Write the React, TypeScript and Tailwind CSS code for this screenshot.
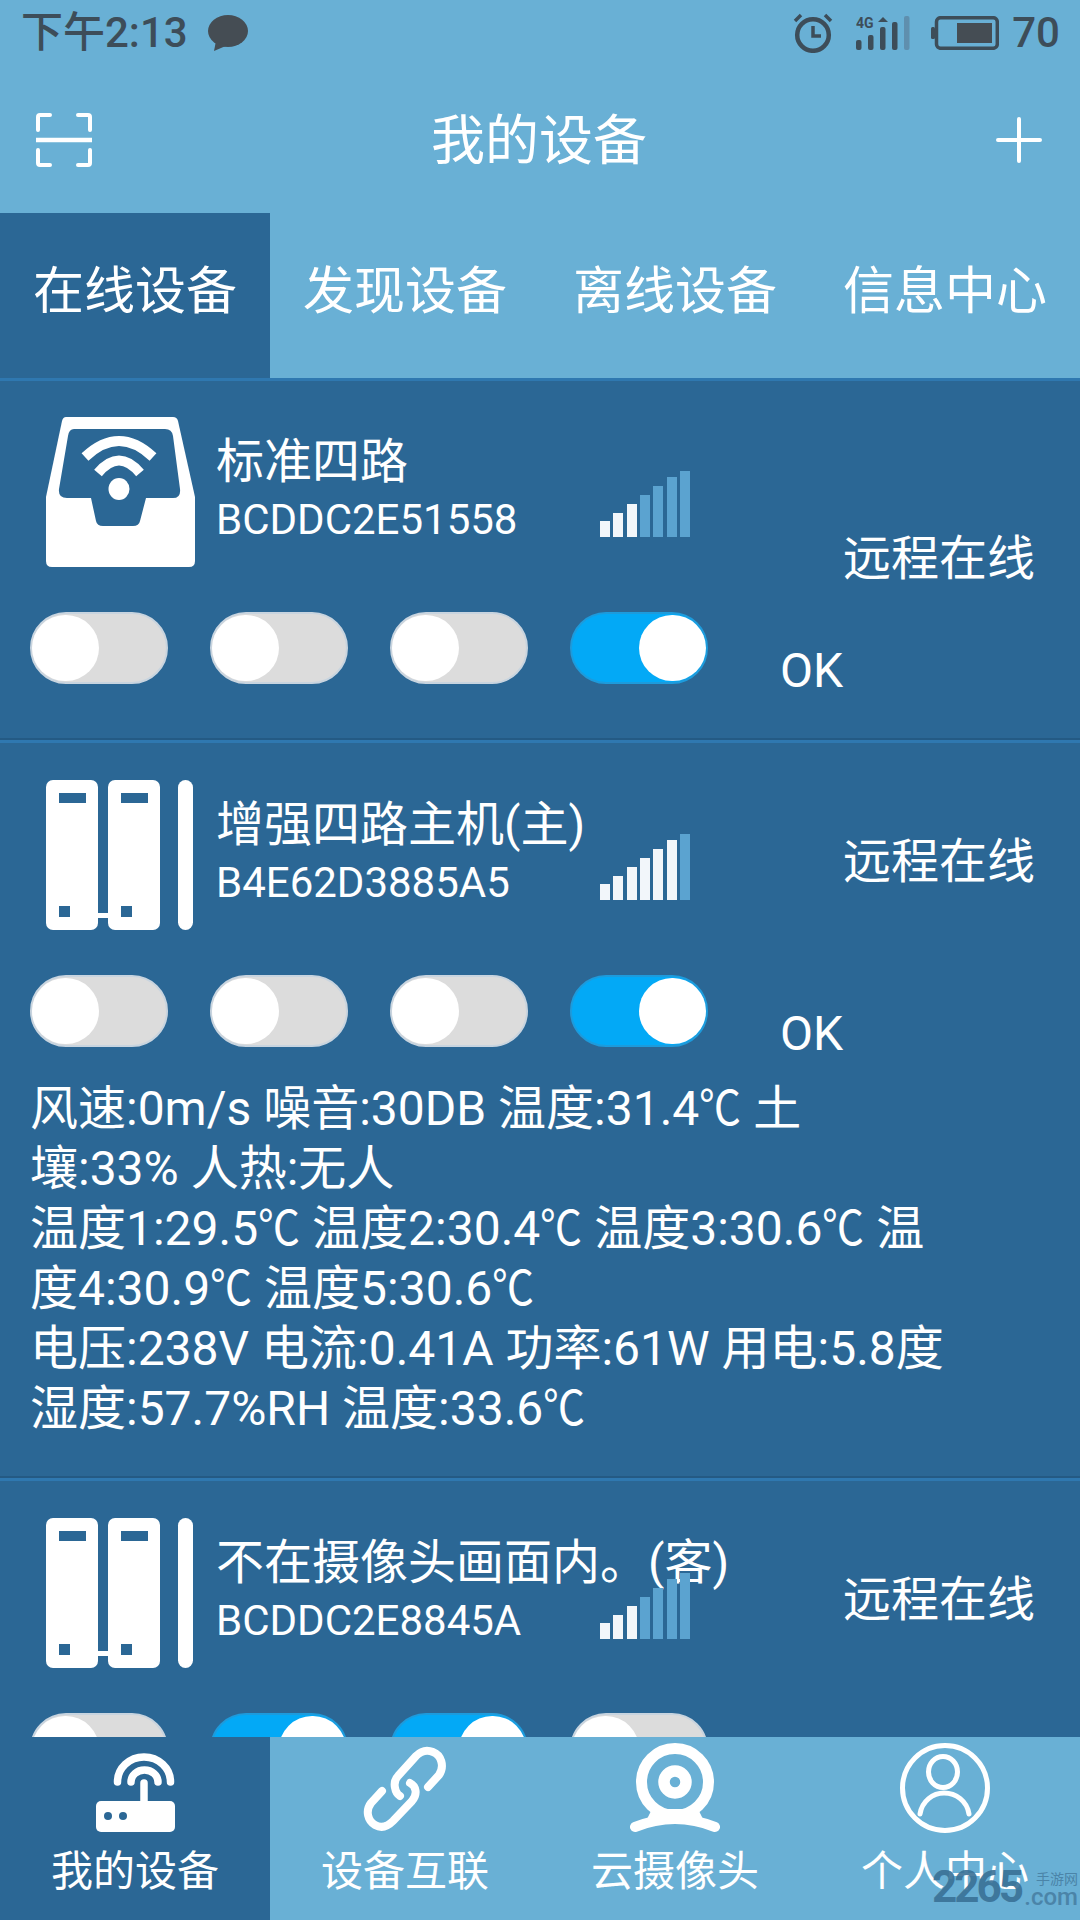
import React from "react";

const cjk = { fontFamily: 'Roboto, "Noto Sans CJK SC", sans-serif' };

function Toggle({ on = false }: { on?: boolean }) {
  return (
    <div className={`flex h-[72px] w-[138px] items-center rounded-[36px] border-2 ${on ? "justify-end border-[#1d9bdc] bg-[#03a9f6]" : "justify-start border-[#c8d4df] bg-[#dcdcdc]"}`}>
      <div className="h-[66px] w-[67px] rounded-full bg-white" />
    </div>
  );
}

function Signal({ lit }: { lit: number }) {
  const hs = [16, 24, 33, 42, 51, 60, 66];
  return (
    <div className="flex h-[66px] w-[90px] items-end justify-between">
      {hs.map((h, i) => (
        <div key={i} className={`w-[10px] ${i < lit ? "bg-[#f2f6fa]" : "bg-[#5ba3d0]"}`} style={{ height: h }} />
      ))}
    </div>
  );
}

function BoxIcon() {
  return (
    <svg width="150" height="150" viewBox="0 0 150 150" className="shrink-0">
      <path d="M20 0H127Q131 0 132 4L149 80V144Q149 150 143 150H6Q0 150 0 144V80L16 4Q17 0 20 0Z" fill="#fff" />
      <path d="M28 12H119Q126 12 127 19L134 72Q135 81 127 81H100L94 104Q93 109 87 109H57Q51 109 50 104L45 81H21Q12 81 13 72L22 19Q23 12 28 12Z" fill="#2b6795" />
      <path d="M39 40Q73 8 107 40" stroke="#fff" strokeWidth="10" fill="none" />
      <path d="M52 56Q73 31 94 56" stroke="#fff" strokeWidth="10" fill="none" />
      <ellipse cx="73" cy="72" rx="10.5" ry="11" fill="#fff" />
    </svg>
  );
}

function ServerIcon() {
  return (
    <svg width="150" height="150" viewBox="0 0 150 150" className="shrink-0">
      <rect x="0" y="0" width="52" height="150" rx="7" fill="#fff" />
      <rect x="62" y="0" width="52" height="150" rx="7" fill="#fff" />
      <rect x="132" y="0" width="15" height="150" rx="7.5" fill="#fff" />
      <rect x="50" y="133" width="14" height="5" fill="#fff" />
      <rect x="13" y="13" width="27" height="10" fill="#2b6795" />
      <rect x="75" y="13" width="27" height="10" fill="#2b6795" />
      <rect x="13" y="126" width="11" height="11" fill="#2b6795" />
      <rect x="75" y="126" width="11" height="11" fill="#2b6795" />
    </svg>
  );
}

function DeviceRow({ icon, name, mac, lit, signalTop, statusTop }: { icon: React.ReactNode; name: string; mac: string; lit: number; signalTop: string; statusTop: string }) {
  return (
    <div className="flex h-[150px] pl-[46px]">
      {icon}
      <div className="ml-[20px] mt-[16px] w-[384px] shrink-0 whitespace-nowrap text-white">
        <div className="h-[58px] text-[48px] leading-[58px]">{name}</div>
        <div className="h-[58px] text-[42px] leading-[58px]">{mac}</div>
      </div>
      <div className={signalTop}><Signal lit={lit} /></div>
      <div className={`ml-[153px] whitespace-nowrap text-[48px] leading-[60px] text-white ${statusTop}`}>远程在线</div>
    </div>
  );
}

function Toggles({ states, ok = true }: { states: boolean[]; ok?: boolean }) {
  return (
    <div className="flex pl-[30px]">
      <div className="flex gap-[42px]">
        {states.map((s, i) => <Toggle key={i} on={s} />)}
      </div>
      {ok && <div className="ml-[72px] mt-[29px] text-[48px] leading-[60px] text-white">OK</div>}
    </div>
  );
}

function Sep() {
  return <div className="h-[5px] shrink-0 border-t-2 border-[#245a84] bg-[#2f78b0]" />;
}

function NavIcon({ i }: { i: number }) {
  if (i === 0)
    return (
      <svg width="80" height="80" viewBox="0 0 80 80">
        <rect x="1" y="48" width="79" height="31" rx="5" fill="#fff" />
        <g stroke="#fff" strokeWidth="7.5" fill="none" strokeLinecap="round">
          <path d="M49 30V50" />
          <path d="M22.5 29A26.5 25 0 0 1 75.5 29" />
          <path d="M36 29A13.5 12 0 0 1 63 29" />
        </g>
        <circle cx="13" cy="63" r="4" fill="#2b6795" />
        <circle cx="28" cy="63" r="4" fill="#2b6795" />
      </svg>
    );
  if (i === 1)
    return (
      <svg width="84" height="85" viewBox="0 0 84 85" fill="none" stroke="#fff" strokeLinecap="round" strokeWidth="8">
        <path d="M65 41L76 29C82 20 78 9 70 6C63 3 57 6 53 10L35 30C29 36 32 47 37 50" />
        <path d="M19 45L8 57C2 65 5 75 12 79C19 83 25 80 30 75L49 55C55 48 53 40 47 37" />
      </svg>
    );
  if (i === 2)
    return (
      <svg width="90" height="90" viewBox="0 0 90 90">
        <circle cx="45" cy="39" r="33.5" fill="none" stroke="#fff" strokeWidth="11" />
        <circle cx="45" cy="39" r="11" fill="none" stroke="#fff" strokeWidth="11.5" />
        <path d="M22 66L68 66L74 78Q45 70 16 78Z" fill="#fff" />
        <path d="M5 84Q45 68 85 84" fill="none" stroke="#fff" strokeWidth="10" strokeLinecap="round" />
      </svg>
    );
  return (
    <svg width="90" height="90" viewBox="0 0 90 90" fill="none" stroke="#fff" strokeWidth="5">
      <circle cx="45" cy="45" r="42.5" />
      <ellipse cx="43" cy="29" rx="14.5" ry="15.5" />
      <path d="M20 71C22 58 33 50 44 50C56 50 67 58 69 71" strokeLinecap="round" />
    </svg>
  );
}

function InfoLine({ text }: { text: string }) {
  const parts = text.split("℃");
  return (
    <div className="h-[60px]">
      {parts.map((p, i) => (
        <React.Fragment key={i}>
          {p}
          {i < parts.length - 1 && <span className="inline-block w-[42px] origin-left scale-x-[0.875] leading-none">℃</span>}
        </React.Fragment>
      ))}
    </div>
  );
}

const tabs = ["在线设备", "发现设备", "离线设备", "信息中心"];
const nav = ["我的设备", "设备互联", "云摄像头", "个人中心"];
const info = [
  "风速:0m/s 噪音:30DB 温度:31.4℃ 土",
  "壤:33% 人热:无人",
  "温度1:29.5℃ 温度2:30.4℃ 温度3:30.6℃ 温",
  "度4:30.9℃ 温度5:30.6℃",
  "电压:238V 电流:0.41A 功率:61W 用电:5.8度",
  "湿度:57.7%RH 温度:33.6℃",
];

export default function App() {
  return (
    <div className="relative flex h-[1920px] w-[1080px] flex-col overflow-hidden bg-[#2b6795]" style={cjk}>
      <div className="shrink-0 bg-[#69b0d5]">
        {/* status bar */}
        <div className="flex h-[66px] items-center pl-[21px] pr-[20px] text-[#3d4d59]">
          <span className="text-[42px] font-medium leading-none">下午2:13</span>
          <svg width="40" height="36" viewBox="0 0 40 36" className="ml-[20px]">
            <ellipse cx="20" cy="16" rx="20" ry="16" fill="#454d54" />
            <path d="M8 26L6 36L20 30Z" fill="#454d54" />
          </svg>
          <div className="flex-1" />
          <svg width="40" height="40" viewBox="0 0 40 40" fill="none" stroke="#3d4d59">
            <circle cx="20" cy="22" r="15.8" strokeWidth="4.5" />
            <path d="M20 13V23H28" strokeWidth="3.5" />
            <path d="M2 8L8 2M38 8L32 2" strokeWidth="3.5" />
          </svg>
          <svg width="54" height="34" viewBox="0 0 54 34" className="ml-[23px]" fill="#3d4d59">
            <text x="0" y="12" fontSize="14" fontWeight="700" fontFamily="Roboto">4G</text>
            <path d="M27 1L32 6H22Z" />
            <rect x="0" y="24" width="5.5" height="10" rx="2" />
            <rect x="12" y="19" width="5.5" height="15" rx="2" />
            <rect x="24" y="11" width="5.5" height="23" rx="2" />
            <rect x="36" y="6" width="5.5" height="28" rx="2" />
            <rect x="48" y="0" width="5.5" height="34" rx="2" fill="#5f8fae" />
          </svg>
          <svg width="68" height="34" viewBox="0 0 68 34" className="ml-[21px]" fill="none">
            <rect x="5.5" y="1.7" width="60.8" height="30.6" rx="4" stroke="#3d4d59" strokeWidth="3.5" />
            <rect x="0" y="11" width="4" height="12" rx="1.5" fill="#3d4d59" />
            <rect x="26" y="7" width="35" height="20" fill="#454d54" />
          </svg>
          <span className="ml-[13px] text-[42px] font-medium leading-none">70</span>
        </div>
        {/* title */}
        <div className="grid h-[147px] grid-cols-[1fr_auto_1fr] items-center pl-[36px] pr-[38px] text-white">
          <svg width="56" height="54" viewBox="0 0 56 54" fill="none" stroke="#fff" strokeWidth="4">
            <path d="M14 2H4Q2 2 2 4V17M42 2H52Q54 2 54 4V17M2 37V50Q2 52 4 52H14M54 37V50Q54 52 52 52H42" strokeLinecap="round" />
            <path d="M0 27H56" strokeWidth="4.5" />
          </svg>
          <span className="pt-[4px] text-[54px] leading-none">我的设备</span>
          <svg width="46" height="46" viewBox="0 0 46 46" stroke="#fff" strokeWidth="4" strokeLinecap="round" className="justify-self-end">
            <path d="M23 2V44M2 23H44" />
          </svg>
        </div>
        {/* tabs */}
        <div className="grid h-[165px] grid-cols-4">
          {tabs.map((t, i) => (
            <div key={t} className={`flex items-center justify-center pb-[7px] text-[51px] text-white ${i === 0 ? "bg-[#2b6795]" : ""}`}>{t}</div>
          ))}
        </div>
        <div className="h-[3px] bg-[#2f78b0]" />
      </div>

      <div className="min-h-0 flex-1 overflow-hidden">
        {/* card 1 */}
        <div className="h-[357px] pt-[36px]">
          <DeviceRow icon={<BoxIcon />} name="标准四路" mac="BCDDC2E51558" lit={3} signalTop="mt-[54px]" statusTop="mt-[112px]" />
          <div className="mt-[45px]"><Toggles states={[false, false, false, true]} /></div>
        </div>
        <Sep />
        {/* card 2 */}
        <div className="h-[733px] pt-[37px]">
          <DeviceRow icon={<ServerIcon />} name="增强四路主机(主)" mac="B4E62D3885A5" lit={6} signalTop="mt-[54px]" statusTop="mt-[52px]" />
          <div className="mt-[45px]"><Toggles states={[false, false, false, true]} /></div>
          <div className="mt-[15px] whitespace-nowrap pl-[30px] text-[48px] leading-[60px] text-white">
            {info.map((l) => <InfoLine key={l} text={l} />)}
          </div>
        </div>
        <Sep />
        {/* card 3 */}
        <div className="pt-[37px]">
          <DeviceRow icon={<ServerIcon />} name="不在摄像头画面内。(客)" mac="BCDDC2E8845A" lit={3} signalTop="mt-[55px]" statusTop="mt-[52px]" />
          <div className="mt-[45px]"><Toggles states={[false, true, true, false]} ok={false} /></div>
        </div>
      </div>

      {/* bottom nav */}
      <div className="grid h-[183px] shrink-0 grid-cols-4 bg-[#69b0d5]">
        {nav.map((t, i) => (
          <div key={t} className={`flex flex-col items-center ${i === 0 ? "bg-[#2b6795]" : ""}`}>
            <div className={`flex h-[100px] items-center ${i === 0 ? "pt-[12px]" : "pt-[2px]"}`}><NavIcon i={i} /></div>
            <div className="mt-[10px] text-[42px] leading-[50px] text-white">{t}</div>
          </div>
        ))}
      </div>

      {/* watermark */}
      <div className="absolute left-[932px] top-[1868px] flex h-[38px] w-[147px] items-end text-[#3a7196]" style={{ fontFamily: "Roboto, sans-serif" }}>
        <span className="w-[93px] text-[44px] font-bold leading-[38px] tracking-[-3px] opacity-90">2265</span>
        <div className="flex w-[53px] flex-col items-end">
          <span className="text-[14px] leading-[20px] text-[#4b84a8]" style={{ fontFamily: '"Noto Sans CJK SC", sans-serif' }}>手游网</span>
          <span className="text-[24px] font-medium leading-[18px] text-[#4b84a8]">.com</span>
        </div>
      </div>
    </div>
  );
}
